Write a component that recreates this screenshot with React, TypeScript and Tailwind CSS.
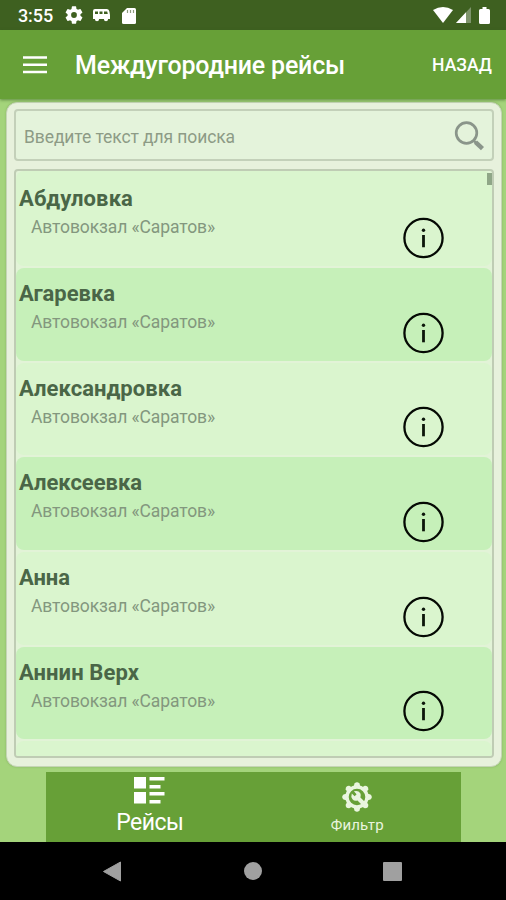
import React from "react";

const stops = ["Абдуловка", "Агаревка", "Александровка", "Алексеевка", "Анна", "Аннин Верх"];
const nameWidths = [114, 96, 163, 123, 51, 120];
const angles = [0, 45, 90, 135, 180, 225, 270, 315];

// Single line of text set to an exact measure.
function Label({ text, width, className }: { text: string; width: number; className: string }) {
  const ref = React.useRef<HTMLSpanElement>(null);
  const [gap, setGap] = React.useState(0);
  React.useLayoutEffect(() => {
    if (ref.current) {
      setGap((width - ref.current.getBoundingClientRect().width) / text.length);
    }
  }, []);
  return (
    <span ref={ref} className={`inline-block whitespace-nowrap ${className}`} style={{ letterSpacing: gap }}>
      {text}
    </span>
  );
}

function StatusBar() {
  return (
    <div className="flex h-[30px] shrink-0 items-center bg-[#3e6020] pl-[18px] pr-[16px] text-white">
      <Label text="3:55" width={35} className="pt-px text-[18px] font-medium leading-[30px]" />
      <svg className="ml-[12px] h-[18px] w-[18px]" viewBox="2 2 20 20" fill="currentColor">
        <path d="M19.14 12.94c.04-.3.06-.61.06-.94 0-.32-.02-.64-.07-.94l2.03-1.58a.49.49 0 0 0 .12-.61l-1.92-3.32a.49.49 0 0 0-.59-.22l-2.39.96a7 7 0 0 0-1.62-.94l-.36-2.54a.48.48 0 0 0-.48-.41h-3.84a.47.47 0 0 0-.47.41l-.36 2.54c-.59.24-1.13.57-1.62.94l-2.39-.96a.48.48 0 0 0-.59.22L2.74 8.87a.48.48 0 0 0 .12.61l2.03 1.58a7.6 7.6 0 0 0 0 1.88l-2.03 1.58a.49.49 0 0 0-.12.61l1.92 3.32c.12.22.37.29.59.22l2.39-.96c.5.38 1.03.7 1.62.94l.36 2.54c.05.24.24.41.48.41h3.84c.24 0 .44-.17.47-.41l.36-2.54a6.8 6.8 0 0 0 1.62-.94l2.39.96c.22.08.47 0 .59-.22l1.92-3.32a.47.47 0 0 0-.12-.61zM12 15.2a3.2 3.2 0 1 1 0-6.4 3.2 3.2 0 0 1 0 6.4z" />
      </svg>
      <svg className="ml-[10px] h-[13px] w-[17px]" viewBox="0 0 17 13">
        <path d="M2 0h12q2 0 2.400 2.500L17 6v4h-2a2 2 0 0 1-4 0H6a2 2 0 0 1-4 0H0V2Q0 0 2 0Z" fill="#fff" />
        <circle cx="4" cy="10.500" r="1.700" fill="#fff" />
        <circle cx="13" cy="10.500" r="1.700" fill="#fff" />
        <path d="M2 2.500h3V5H2zM6.500 2.500h3V5h-3zM11 2.500h3.200l.6 2.500H11z" fill="#3e6020" />
      </svg>
      <svg className="ml-[12px] mt-px h-[16px] w-[14px]" viewBox="0 0 14 16">
        <path d="M5 0h7.500Q14 0 14 1.500v13q0 1.500-1.500 1.500h-11Q0 16 0 14.500V5Z" fill="#fff" />
        <path d="M5.500 2v3M8.500 2v3M11.500 2v3" stroke="#8d9c7d" strokeWidth="1.200" />
      </svg>
      <svg className="ml-auto h-[16px] w-[20px]" viewBox="0 0 20 16">
        <path d="M0 3Q10-3 20 3L10 16Z" fill="#fff" />
      </svg>
      <svg className="ml-[3px] h-[16px] w-[15px]" viewBox="0 0 15 16">
        <path d="M15 0v16H0Z" fill="#7e946c" />
        <path d="M10 5.300V16H0Z" fill="#fff" />
      </svg>
      <svg className="ml-[8px] h-[17px] w-[11px]" viewBox="0 0 11 17">
        <path d="M3.500 0h4v2H9.500Q11 2 11 3.500v12Q11 17 9.500 17h-8Q0 17 0 15.500v-12Q0 2 1.500 2h2Z" fill="#fff" />
      </svg>
    </div>
  );
}

function InfoIcon() {
  return (
    <svg className="h-[42px] w-[42px]" viewBox="0 0 42 42">
      <circle cx="21.500" cy="21" r="19.100" fill="none" stroke="#050a04" strokeWidth="2.300" />
      <path d="M21.500 18v12.300" stroke="#0c160a" strokeWidth="2.800" />
      <circle cx="21.500" cy="13.300" r="1.700" fill="#0c160a" />
    </svg>
  );
}

export default function App() {
  return (
    <div className="flex h-[900px] w-[506px] flex-col overflow-hidden bg-[#a4d47b] font-['Roboto','Noto_Sans',sans-serif]">
      <StatusBar />
      <header className="z-10 flex h-[69px] shrink-0 items-center bg-[#67a037] pl-[23px] pr-[14px] text-white shadow-[0_1px_3px_rgba(50,90,30,0.6)]">
        <svg className="h-[18px] w-[24px]" viewBox="0 0 24 18">
          <path d="M0 1.500h24M0 8.800h24M0 16.100h24" stroke="#fff" strokeWidth="2.500" />
        </svg>
        <Label text="Междугородние рейсы" width={270} className="ml-[28px] mt-[2px] text-[25px] font-medium leading-[30px]" />
        <Label text="НАЗАД" width={60} className="ml-auto text-[17.500px] font-medium leading-6" />
      </header>
      <main className="ml-[6px] mt-[3px] flex h-[665px] w-[496px] shrink-0 flex-col gap-[8px] rounded-[11px] border border-[#c5d5b5] bg-[#e7f1dc] px-[7px] pt-[6px] shadow-[0_0_2px_rgba(90,130,60,0.4)]">
        <div className="flex h-[52px] shrink-0 items-center rounded-[4px] border-2 border-[#c3d0b9] bg-[#e4f3db] pl-[8px] pr-[7px]">
          <Label text="Введите текст для поиска" width={211} className="mt-[3px] text-[17.500px] leading-6 text-[#8d9b86]" />
          <svg className="ml-auto mt-[2px] h-[30px] w-[31px]" viewBox="0 0 31 30">
            <circle cx="12.500" cy="12" r="10.300" fill="none" stroke="#8a958a" strokeWidth="2.700" />
            <path d="M19.500 19.300l3 3" stroke="#8a958a" strokeWidth="2.500" />
            <path d="M21.500 21.200l7 6.500" stroke="#8a958a" strokeWidth="4.500" />
          </svg>
        </div>
        <div className="relative flex h-[589px] flex-col overflow-hidden rounded-[4px] border-2 border-[#bfccb4] bg-[#e2f3d7]">
          {stops.map((name, i) => (
            <div
              key={name}
              className={`mb-[2px] flex shrink-0 rounded-[8px] ${i === 0 ? "h-[95px]" : "h-[92.700px]"} ${i % 2 ? "bg-[#c6f0b9]" : "bg-[#daf5ce]"} items-end`}
            >
              <div className="flex h-[92.700px] grow flex-col pl-[3px] pt-[12px]">
                <Label text={name} width={nameWidths[i]} className="self-start text-[22px] font-bold leading-[28px] text-[#4a6647]" />
                <Label text="Автовокзал «Саратов»" width={184} className="ml-[12px] mt-[1px] self-start text-[17.500px] leading-[26px] text-[#83977e]" />
              </div>
              <div className="mb-[7px] mr-[48px]">
                <InfoIcon />
              </div>
            </div>
          ))}
          <div className="grow rounded-t-[8px] bg-[#daf5ce]" />
          <div className="absolute right-0 top-[2px] h-[12px] w-[5px] bg-[#8fa687]" />
        </div>
      </main>
      <nav className="ml-[46px] mt-[5px] flex h-[70px] w-[415px] shrink-0 bg-[#67a037]">
        <div className="flex w-1/2 flex-col items-center pt-[5px] text-white">
          <svg className="h-[27px] w-[31px]" viewBox="0 0 31 27">
            <path d="M0 0h12v11.500H0zM0 15h12v11.500H0zM15.500 0h15v3.500h-15zM15.500 8h11v3.500h-11zM15.500 15h15v3.500h-15zM15.500 23h11v3.500h-11z" fill="#fff" />
          </svg>
          <Label text="Рейсы" width={67} className="mt-[5px] text-[23px] leading-[28px]" />
        </div>
        <div className="flex w-1/2 flex-col items-center pt-[10px] text-[#eaf5df]">
          <svg className="h-[30px] w-[30px]" viewBox="-15 -15 30 30">
            {angles.map((a) => (
              <path key={a} d="M-3.500-10L-2.500-13.500Q0-16.200 2.500-13.500L3.500-10Z" transform={`rotate(${a})`} fill="#eaf5df" />
            ))}
            <circle r="10" fill="none" stroke="#eaf5df" strokeWidth="3.400" />
            <path d="M-5.200-3.500L-2.300-.8-.4-2.700-3.100-5.700Q1.200-7 3.300-3.800 4.400-1.700 3.400.4L9 6 6 9 .5 3.400Q-2.500 4.500-4.500 2.200-6.400-.2-5.200-3.500Z" fill="#eaf5df" />
          </svg>
          <Label text="Фильтр" width={53} className="mt-px text-[15px] leading-[24px]" />
        </div>
      </nav>
      <footer className="flex h-[58px] shrink-0 items-center bg-black pl-[103px]">
        <svg className="h-[21px] w-[18px]" viewBox="0 0 18 21">
          <path d="M17.500 1v19L.5 10.500Z" fill="#a0a0a0" stroke="#a0a0a0" strokeLinejoin="round" />
        </svg>
        <div className="ml-[123px] h-[18px] w-[18px] rounded-full bg-[#a0a0a0]" />
        <div className="ml-[121px] h-[19px] w-[19px] rounded-[1px] bg-[#a0a0a0]" />
      </footer>
    </div>
  );
}
